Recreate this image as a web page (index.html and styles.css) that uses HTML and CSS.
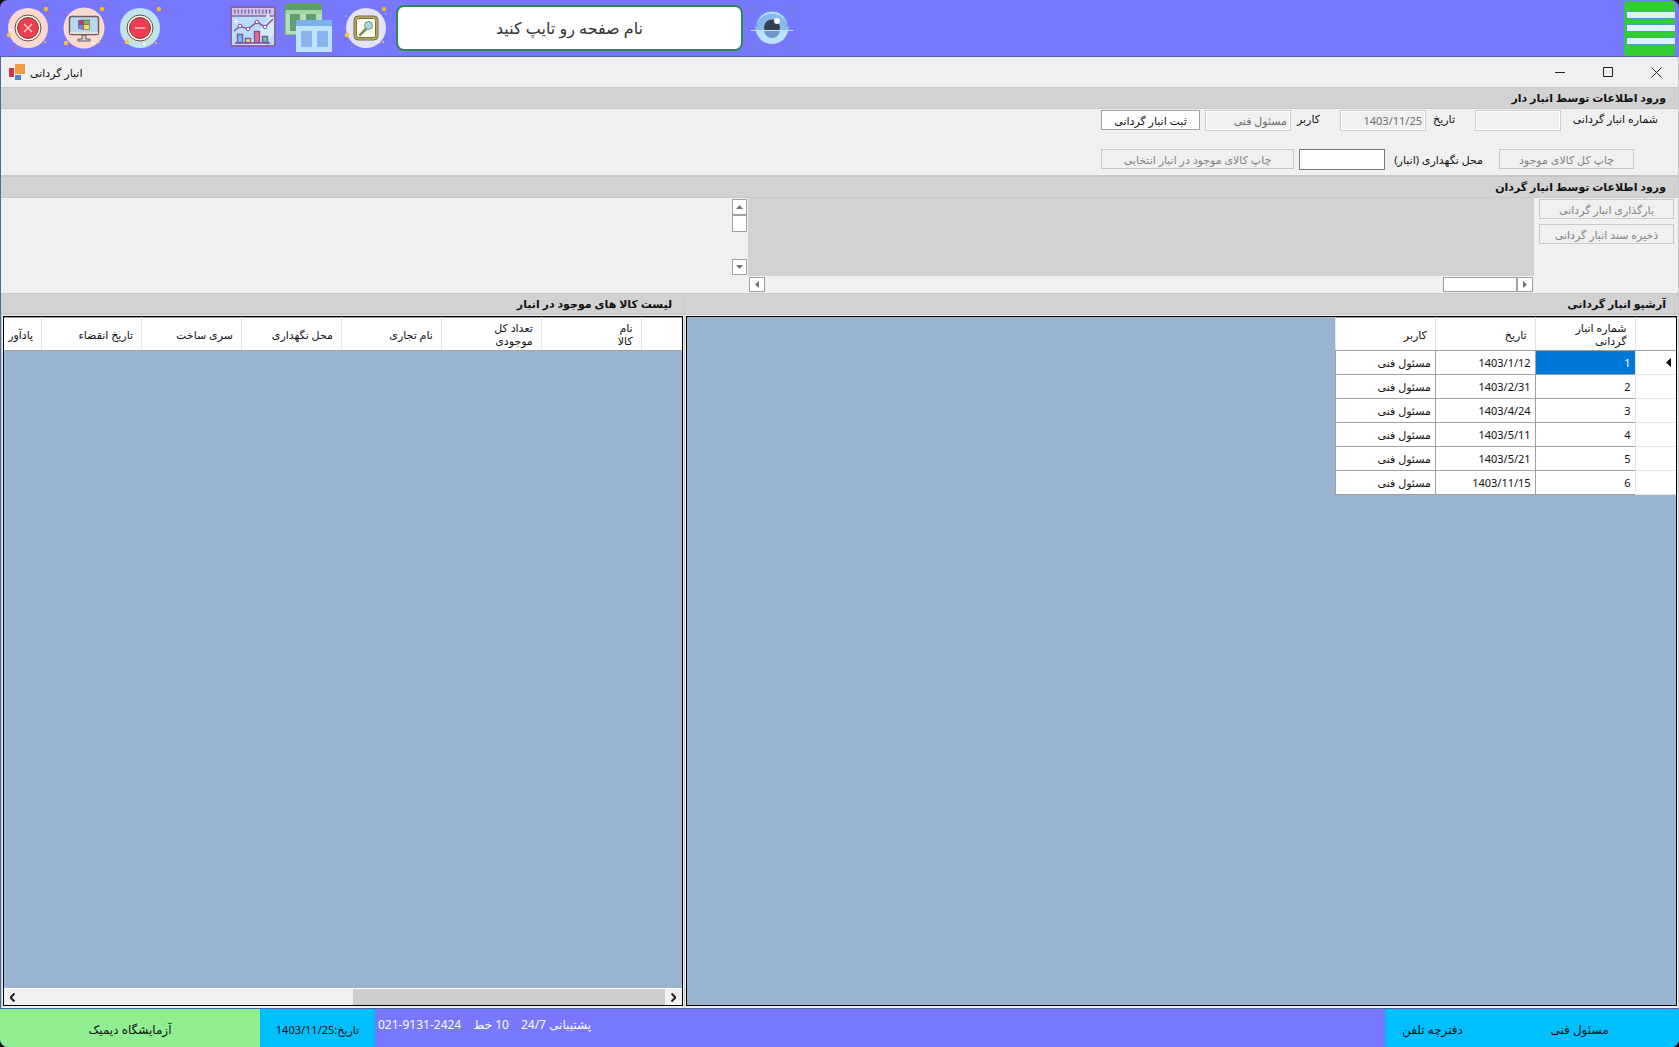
FILE: index.html
```html
<!DOCTYPE html>
<html lang="fa" dir="rtl">
<head>
  <meta charset="UTF-8">
  <meta name="viewport" content="width=device-width, initial-scale=1.0">
  <title>انبار گردانی</title>
  <link rel="stylesheet" href="styles.css">
</head>
<body>
  <header class="topbar">
    <div class="tools">
      <button class="tool" aria-label="خروج">
        <svg width="44" height="44" viewBox="0 0 44 44">
          <circle cx="22" cy="22" r="20" fill="#fbd9d0"/>
          <circle cx="22" cy="22" r="13" fill="#fff8ec" stroke="#6b4a42"/>
          <circle cx="22" cy="22" r="10.5" fill="#f03c50" stroke="#6b4a42"/>
          <path d="M18 18l8 8M26 18l-8 8" stroke="#e6cfc0" stroke-width="1.6"/>
          <circle cx="40" cy="3" r="2.2" fill="#f5b921"/><circle cx="3" cy="29" r="2.2" fill="#fbc444"/>
          <circle cx="2" cy="10" r="1" fill="#f03c50"/><circle cx="42" cy="8" r="1" fill="#f03c50"/>
          <circle cx="8" cy="42" r="1" fill="#f03c50"/><circle cx="39" cy="36" r="1" fill="#fbc444"/>
          <circle cx="5" cy="24" r="1.2" fill="#fff"/>
        </svg>
      </button>
      <button class="tool" aria-label="دسکتاپ">
        <svg width="44" height="44" viewBox="0 0 44 44">
          <circle cx="22" cy="22" r="20.5" fill="#fbd9d0"/>
          <path d="M20 29h4v4h4v2H16v-2h4z" fill="#d9cbbb" stroke="#6b5a5e"/>
          <rect x="7.5" y="10.5" width="29" height="18" rx="2" fill="#b8d8f0" stroke="#6b5a5e" stroke-width="1.5"/>
          <path d="M8 26h28v2H8z" fill="#e8e0dc"/>
          <path d="M16.500 14.500l5-.500v4.500h-5z" fill="#d8306a" stroke="#4a4a5e" stroke-width=".5"/>
          <path d="M21.500 14h6v4.500h-6z" fill="#7fb069" stroke="#4a4a5e" stroke-width=".5"/>
          <path d="M16.500 18.500h5v5l-5-1z" fill="#8a7fd8" stroke="#4a4a5e" stroke-width=".5"/>
          <path d="M21.500 18.500h6v5h-6z" fill="#f2e34c" stroke="#4a4a5e" stroke-width=".5"/>
          <circle cx="40" cy="3" r="2.2" fill="#f5b921"/><circle cx="4" cy="37" r="2.2" fill="#fbc444"/>
          <circle cx="2" cy="9" r="1" fill="#f03c50"/><circle cx="8" cy="40" r="1" fill="#f03c50"/>
          <circle cx="31" cy="37" r="1.3" fill="#fff"/><circle cx="37" cy="36" r="1" fill="#fbc444"/>
        </svg>
      </button>
      <button class="tool" aria-label="کوچک کردن">
        <svg width="44" height="44" viewBox="0 0 44 44">
          <circle cx="22" cy="22" r="20" fill="#bfe5e8"/>
          <circle cx="22" cy="22" r="13" fill="#fff8ec" stroke="#6b4a42"/>
          <circle cx="22" cy="22" r="10.5" fill="#f03c50" stroke="#6b4a42"/>
          <path d="M17 22h10" stroke="#e0a8a0" stroke-width="2"/>
          <circle cx="41" cy="3" r="2.2" fill="#f5b921"/><circle cx="9" cy="36" r="2.2" fill="#fbc444"/>
          <circle cx="2" cy="10" r="1" fill="#20a39e"/><circle cx="9" cy="42" r="1" fill="#20a39e"/>
          <circle cx="26" cy="38" r="1.3" fill="#fff"/><circle cx="38" cy="37" r="1" fill="#fbc444"/>
        </svg>
      </button>
    </div>
    <div class="tools pages">
      <button class="tool" aria-label="گزارش">
        <svg width="46" height="44" viewBox="0 0 46 44">
          <rect x="1" y="1" width="44" height="39" rx="1" fill="#b9dcf8" stroke="#8866a8" stroke-width="2"/>
          <path d="M2 2h42v8H2z" fill="#cfc3ea"/>
          <path d="M18 39L40 11h4v16l-9 12z" fill="#d4ebfc"/>
          <path d="M4 5.5h38" stroke="#8866a8" stroke-width="4" stroke-dasharray="1.500 2"/>
          <path d="M2 10h42" stroke="#8866a8" stroke-width="1.5"/>
          <path d="M6 13v5M4 15.5h5M38 8v4M36 10h4" stroke="#fff"/>
          <rect x="7.5" y="28.5" width="5" height="8" fill="#73c5f5" stroke="#8054a0" stroke-width="1.5"/>
          <rect x="15.5" y="32.500" width="5" height="4" fill="#ffe28a" stroke="#8054a0" stroke-width="1.5"/>
          <rect x="24.5" y="25.5" width="5" height="11" fill="#f06488" stroke="#8054a0" stroke-width="1.5"/>
          <rect x="32.5" y="30.5" width="5" height="6" fill="#6cc5a0" stroke="#8054a0" stroke-width="1.5"/>
          <path d="M5 37h35M4 25l6-5 8 3 9-7 8 5 8-8" fill="none" stroke="#8054a0" stroke-width="1.5"/>
          <circle cx="10" cy="20" r="1.8" fill="#fff" stroke="#8054a0"/><circle cx="18" cy="23" r="1.8" fill="#fff" stroke="#8054a0"/>
          <circle cx="27" cy="16" r="1.8" fill="#fff" stroke="#8054a0"/><circle cx="35" cy="21" r="1.8" fill="#fff" stroke="#8054a0"/>
        </svg>
      </button>
      <button class="tool" aria-label="پنجره ها">
        <svg width="52" height="48" viewBox="0 0 52 48">
          <path d="M1 0h37v31H1z" fill="#b2dfb5"/>
          <path d="M1 0h37v6H1z" fill="#5aa06c"/>
          <path d="M1 6h37v4H1z" fill="#a5d6a7"/>
          <path d="M6 10h10v17H6zM22 10h10v17H22z" fill="#5f9f73"/>
          <path d="M1 0v31h11" fill="none" stroke="#5f9f73"/>
          <path d="M12 16h36v32H12z" fill="#bce3ff"/>
          <path d="M12 16h36v6H12z" fill="#7cb0ea"/>
          <path d="M17 27h11v16H17zM33 27h11v16H33z" fill="#8ab4ee"/>
        </svg>
      </button>
      <button class="tool" aria-label="جستجو">
        <svg width="44" height="44" viewBox="0 0 44 44">
          <circle cx="22" cy="22" r="20" fill="#e4e3f7"/>
          <rect x="10" y="10" width="24" height="24" rx="4" fill="#b8ad5e" stroke="#77703c"/>
          <rect x="12.5" y="12.5" width="19" height="19" rx="2" fill="#fffdf0" stroke="#77703c"/>
          <path d="M22 23l-6 6" stroke="#7d8a5a" stroke-width="2.5" stroke-linecap="round"/>
          <circle cx="24.5" cy="19.5" r="4" fill="#9fdcdc" stroke="#7a8a8a"/>
          <circle cx="40" cy="3" r="2.2" fill="#f5b921"/><circle cx="3" cy="29" r="2.2" fill="#fbc444"/>
          <circle cx="2" cy="10" r="1" fill="#a9a4d8"/><circle cx="42" cy="8" r="1" fill="#a9a4d8"/>
          <circle cx="8" cy="42" r="1" fill="#a9a4d8"/><circle cx="39" cy="36" r="1" fill="#fbc444"/>
        </svg>
      </button>
    </div>
    <input class="search" type="text" placeholder="نام صفحه رو تایپ کنید" aria-label="نام صفحه رو تایپ کنید" dir="rtl">
    <button class="tool" aria-label="نمایش">
      <svg width="44" height="44" viewBox="0 0 44 44">
        <path d="M1 8V2h6M35 2h6v6M1 36v6h6M35 42h6v-6" fill="none" stroke="#6f86c8" stroke-width="1.5"/>
        <circle cx="21" cy="21.5" r="16.5" fill="#bce3ff"/>
        <path d="M4.5 24a16.5 16.5 0 1 1 33 0z" fill="#8cb8f0"/>
        <path d="M5 21a16 16 0 0 1 32 0" fill="none" stroke="#5b8ad0"/>
        <circle cx="21" cy="21.5" r="8" fill="#37404e"/>
        <path d="M13 24h16a8 8 0 0 1-16 0z" fill="#6f98c8"/>
        <circle cx="26" cy="15" r="3" fill="#fff"/>
        <path d="M0 24.5h42" stroke="#bce3ff"/>
      </svg>
    </button>
    <button class="menu" aria-label="منو">
      <span></span>
      <span></span>
      <span></span>
    </button>
  </header>

  <main class="window">
    <div class="titlebar">
      <svg width="16" height="16" viewBox="0 0 16 16">
        <path d="M0 4h5v9H0z" fill="#d13347"/>
        <path d="M6 0h10v10H6z" fill="#f29a3f"/>
        <path d="M6 11h6v5H6z" fill="#4a88c9"/>
      </svg>
      <h1>انبار گردانی</h1>
      <div class="controls">
        <button aria-label="کمینه"><svg width="11" height="11" viewBox="0 0 11 11"><path d="M0 5.5h10"/></svg></button>
        <button aria-label="بیشینه"><svg width="11" height="11" viewBox="0 0 11 11"><path d="M.5.5h9v9h-9z"/></svg></button>
        <button aria-label="بستن"><svg width="11" height="11" viewBox="0 0 11 11"><path d="M.5.5l10 10M10.5.5l-10 10"/></svg></button>
      </div>
    </div>

    <section>
      <h2>ورود اطلاعات توسط انبار دار</h2>
      <form class="form">
        <div class="form-row">
          <div class="field">
            <label class="label-number" for="number">شماره انبار گردانی</label>
            <input type="text" id="number" disabled>
          </div>
          <div class="field">
            <label class="label-short" for="date">تاریخ</label>
            <input type="text" id="date" value="1403/11/25" disabled>
          </div>
          <div class="field">
            <label class="label-short" for="user">کاربر</label>
            <input type="text" id="user" value="مسئول فنی" disabled>
            <button class="btn btn-save" type="button">ثبت انبار گردانی</button>
          </div>
        </div>
        <div class="form-row print-row">
          <button class="btn btn-all" type="button" disabled>چاپ کل کالای موجود</button>
          <div class="field">
            <label class="label-store" for="store">محل نگهداری (انبار)</label>
            <input type="text" id="store">
            <button class="btn btn-store" type="button" disabled>چاپ کالای موجود در انبار انتخابی</button>
          </div>
        </div>
      </form>
    </section>

    <section>
      <h2>ورود اطلاعات توسط انبار گردان</h2>
      <div class="loader">
        <div class="loader-buttons">
          <button class="btn" type="button" disabled>بارگذاری انبار گردانی</button>
          <button class="btn" type="button" disabled>ذخیره سند انبار گردانی</button>
        </div>
        <div class="viewer">
          <div class="viewer-area"></div>
          <div class="vscroll">
            <button class="arrow" aria-label="بالا"><svg width="7" height="4" viewBox="0 0 7 4"><path d="M0 4l3.5-4L7 4z"/></svg></button>
            <span class="vthumb"></span>
            <button class="arrow arrow-end" aria-label="پایین"><svg width="7" height="4" viewBox="0 0 7 4"><path d="M0 0l3.5 4L7 0z"/></svg></button>
          </div>
          <div class="hscroll">
            <button class="arrow" aria-label="راست"><svg width="4" height="7" viewBox="0 0 4 7"><path d="M0 0l4 3.5L0 7z"/></svg></button>
            <span class="hthumb"></span>
            <button class="arrow arrow-last" aria-label="چپ"><svg width="4" height="7" viewBox="0 0 4 7"><path d="M4 0L0 3.5 4 7z"/></svg></button>
          </div>
        </div>
      </div>
    </section>

    <div class="lists">
      <section class="panel archive">
        <h2>آرشیو انبار گردانی</h2>
        <div class="grid">
          <table class="archive-table">
            <thead>
              <tr><th class="row-head"></th><th>شماره انبار گردانی</th><th>تاریخ</th><th>کاربر</th></tr>
            </thead>
            <tbody>
              <tr><td class="row-head"><svg width="5" height="9" viewBox="0 0 5 9"><path d="M5 0L0 4.5 5 9z"/></svg></td><td class="selected">1</td><td>1403/1/12</td><td>مسئول فنی</td></tr>
              <tr><td class="row-head"></td><td>2</td><td>1403/2/31</td><td>مسئول فنی</td></tr>
              <tr><td class="row-head"></td><td>3</td><td>1403/4/24</td><td>مسئول فنی</td></tr>
              <tr><td class="row-head"></td><td>4</td><td>1403/5/11</td><td>مسئول فنی</td></tr>
              <tr><td class="row-head"></td><td>5</td><td>1403/5/21</td><td>مسئول فنی</td></tr>
              <tr><td class="row-head"></td><td>6</td><td>1403/11/15</td><td>مسئول فنی</td></tr>
            </tbody>
          </table>
        </div>
      </section>

      <section class="panel stock">
        <h2>لیست کالا های موجود در انبار</h2>
        <div class="grid">
          <table class="stock-table">
            <thead>
              <tr>
                <th class="row-head"></th>
                <th>نام<br>کالا</th>
                <th>تعداد کل<br>موجودی</th>
                <th>نام تجاری</th>
                <th>محل نگهداری</th>
                <th>سری ساخت</th>
                <th>تاریخ انقضاء</th>
                <th>یادآور</th>
              </tr>
            </thead>
          </table>
          <div class="scrollbar">
            <button aria-label="راست"><svg width="5" height="9" viewBox="0 0 5 9"><path d="M.5.5l4 4-4 4"/></svg></button>
            <span class="thumb"></span>
            <button class="arrow-last" aria-label="چپ"><svg width="5" height="9" viewBox="0 0 5 9"><path d="M4.5.5l-4 4 4 4"/></svg></button>
          </div>
        </div>
      </section>
    </div>
  </main>

  <footer class="statusbar">
    <div class="lab">آزمایشگاه دیمیک</div>
    <div class="today" dir="rtl">تاریخ:1403/11/25</div>
    <div class="support"><bdi>021-9131-2424</bdi><bdi>10 خط</bdi><bdi>پشتیبانی 24/7</bdi></div>
    <a class="phones" href="#">دفترچه تلفن</a>
    <a class="account" href="#">مسئول فنی</a>
  </footer>
</body>
</html>
```

FILE: styles.css
```css
* {
  box-sizing: border-box;
}
html {
  background: #111;
}
body {
  margin: 0;
  min-height: 100vh;
  display: flex;
  flex-direction: column;
  font-family: Tahoma, "Noto Sans", "DejaVu Sans", sans-serif;
  font-size: 11px;
  line-height: 13px;
  color: #111;
  background: #7878ff;
  border-radius: 8px;
  overflow: hidden;
}
button, input {
  font: inherit;
  border-radius: 0;
  margin: 0;
}
button {
  padding: 0;
  border: 0;
  background: none;
  color: inherit;
}
svg {
  display: block;
}

/* top bar */
.topbar {
  direction: ltr;
  display: flex;
  align-items: center;
  gap: 8px;
  height: 56px;
  padding: 0 4px 0 6px;
}
.tools {
  display: flex;
  align-items: center;
  gap: 12px;
}
.pages {
  gap: 8px;
  margin-left: 60px;
}
.search {
  width: 347px;
  height: 46px;
  border: 2px solid #2e8b57;
  border-radius: 8px;
  background: #fff;
  font-size: 16px;
  text-align: center;
}
.search::placeholder {
  color: #333;
  opacity: 1;
}
.menu {
  display: flex;
  flex-direction: column;
  justify-content: center;
  align-items: flex-end;
  gap: 5px;
  width: 51px;
  height: 55px;
  margin-left: auto;
  border-radius: 4px;
  background: #32cd32;
}
.menu span {
  width: 49px;
  height: 8px;
  border: 1px solid #4a9fc8;
  border-right: 0;
  background: #dff0fd;
}

/* window */
.window {
  flex: 1;
  display: flex;
  flex-direction: column;
  border: 1px solid #4a6aa5;
  border-right-color: #c8c8c8;
  background: #f0f0f0;
}
.titlebar {
  direction: ltr;
  display: flex;
  align-items: center;
  gap: 5px;
  height: 30px;
  padding-left: 8px;
}
h1 {
  margin: 0;
  font-size: 11px;
  font-weight: normal;
}
.controls {
  display: flex;
  gap: 4px;
  height: 100%;
  margin-left: auto;
}
.controls button {
  width: 44px;
  display: flex;
  align-items: center;
  justify-content: center;
}
.controls svg, .scrollbar svg {
  fill: none;
  stroke: #222;
}
h2 {
  margin: 0;
  height: 22px;
  padding: 3px 12px;
  border: solid #c8c8c8;
  border-width: 1px 0;
  background: #d2d2d2;
  font-size: 11px;
  line-height: 13px;
}

/* forms */
.form {
  height: 67px;
  padding: 1px 20px;
  border-bottom: 1px solid #c8c8c8;
}
.form-row {
  display: flex;
  gap: 20px;
}
.print-row {
  gap: 16px;
  margin-top: 18px;
  padding-right: 24px;
}
.field {
  display: flex;
}
.field input {
  width: 86px;
  height: 21px;
  padding: 0 3px;
  border: 1px solid #7a7a7a;
  background: #fff;
}
.field input:disabled {
  border-color: #ccc;
  background: #f0f0f0;
  color: #6d6d6d;
  box-shadow: inset 0 0 0 1px #fff;
}
label {
  padding-top: 2px;
  white-space: nowrap;
}
.print-row label {
  padding-top: 4px;
}
.label-number {
  width: 97px;
}
.label-store {
  width: 98px;
}
.label-short {
  width: 29px;
}
.btn {
  height: 20px;
  border: 1px solid #a0a0a0;
  background: #fff;
  white-space: nowrap;
}
.btn:disabled {
  border-color: #c8c8c8;
  background: #f0f0f0;
  color: #838383;
}
.field .btn {
  margin-right: 5px;
}
.btn-save {
  width: 99px;
}
.btn-all {
  width: 135px;
}
.btn-store {
  width: 193px;
}

.loader {
  display: flex;
  height: 95px;
}
.loader-buttons {
  display: flex;
  flex-direction: column;
  gap: 5px;
  width: 144px;
  padding: 1px 4px 0 5px;
}
.viewer {
  display: grid;
  grid-template-columns: 786px 17px;
  grid-template-rows: 78px 17px;
}
.viewer-area {
  background: #d2d2d2;
}
.vscroll, .hscroll {
  display: flex;
  padding: 1px;
}
.vscroll {
  flex-direction: column;
}
.arrow {
  width: 16px;
  height: 16px;
  display: flex;
  align-items: center;
  justify-content: center;
  border: 1px solid #a0a0a0;
  background: #fff;
  fill: #707070;
}
.vscroll .arrow {
  width: 15px;
}
.hscroll .arrow {
  height: 15px;
}
.arrow-end {
  margin-top: auto;
}
.arrow-last {
  margin-right: auto;
}
.vthumb, .hthumb {
  border: 1px solid #a0a0a0;
  background: #fff;
}
.vthumb {
  height: 17px;
}
.hthumb {
  width: 74px;
}

/* lists */
.lists {
  flex: 1;
  display: flex;
}
.panel {
  display: flex;
  flex-direction: column;
  min-width: 0;
}
.archive {
  flex: 994;
}
.stock {
  flex: 683;
  border: solid #c8c8c8;
  border-width: 0 1px;
}
.grid {
  flex: 1;
  display: flex;
  flex-direction: column;
  min-width: 0;
  margin: 1px 1px 2px;
  border: 1px solid #000;
  background: #99b4d1;
  overflow: hidden;
}
table {
  table-layout: fixed;
  border-collapse: collapse;
}
.archive-table {
  width: 341px;
}
.stock-table {
  width: 741px;
}
.row-head {
  width: 41px;
}
th, td {
  border: 1px solid #a0a0a0;
  background: #fff;
  text-align: right;
}
th {
  height: 33px;
  padding: 0 8px;
  border-color: #a0a0a0 #e5e5e5;
  font-weight: normal;
}
td {
  height: 24px;
  padding: 0 4px;
}
td.row-head {
  padding: 0 5px;
  border-color: #e5e5e5;
}
th:first-child, td:first-child {
  border-right: 0;
}
td.selected {
  background: #0078d7;
  color: #fff;
}
.scrollbar {
  display: flex;
  height: 17px;
  margin-top: auto;
  border-top: 1px solid #fff;
  background: #f0f0f0;
}
.scrollbar button {
  width: 17px;
  display: flex;
  align-items: center;
  justify-content: center;
}
.scrollbar svg {
  stroke-width: 2px;
}
.thumb {
  width: 46%;
  background: #cdcdcd;
}

/* status bar */
.statusbar {
  direction: ltr;
  display: flex;
  height: 38px;
  line-height: 42px;
  font-size: 12px;
  text-align: center;
}
.statusbar a {
  color: #111;
  text-decoration: none;
  background: #00bfff;
}
.lab {
  width: 260px;
  background: #90ee90;
}
.today {
  width: 115px;
  background: #00bfff;
  font-size: 11px;
}
.support {
  flex: 1;
  display: flex;
  gap: 12px;
  padding-left: 3px;
  line-height: 32px;
  color: #fff;
}
.phones {
  width: 95px;
}
.account {
  width: 199px;
}
```
